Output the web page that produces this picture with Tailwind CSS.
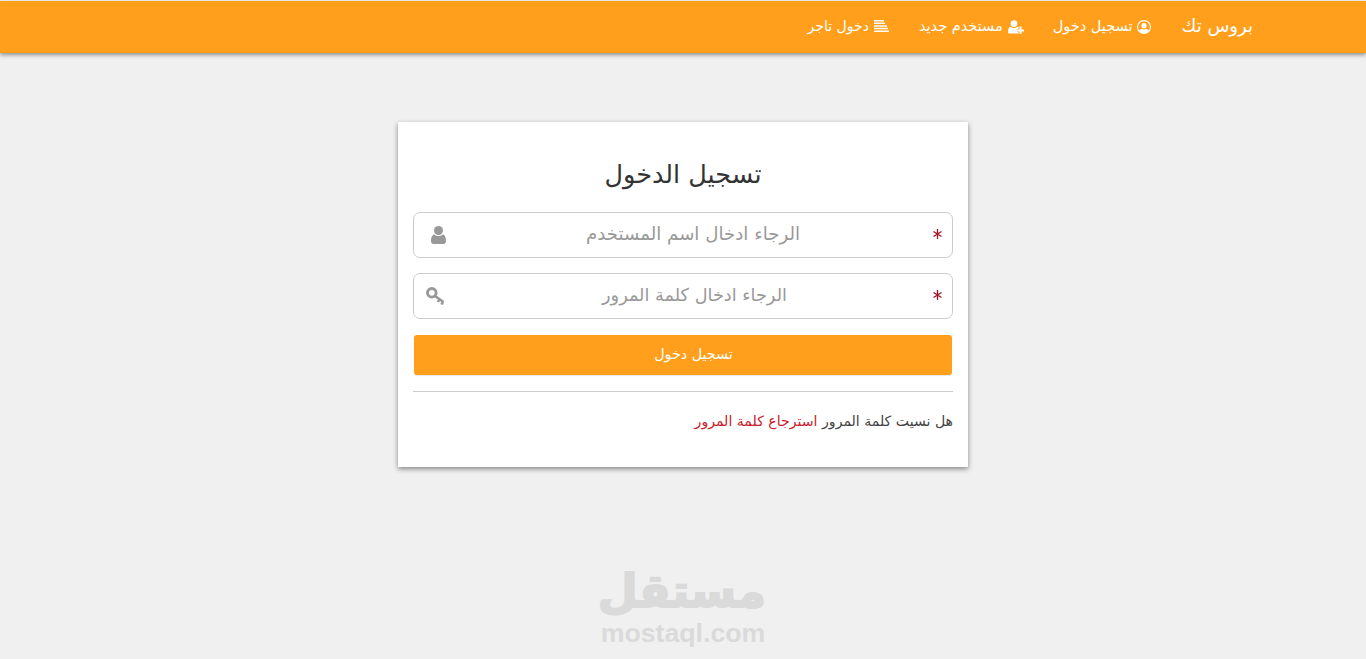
<!DOCTYPE html>
<html lang="ar" dir="rtl">
<head>
  <meta charset="UTF-8">
  <title>تسجيل الدخول</title>
  <script src="https://cdn.jsdelivr.net/npm/@tailwindcss/browser@4"></script>
</head>
<body class="relative h-[659px] overflow-hidden bg-[#f0f0f0] font-['DejaVu_Sans',sans-serif] text-[#444]">
  <!-- Navbar -->
  <nav class="mt-px flex h-[52px] items-center bg-[#ff9f1c] pr-[113px] text-white shadow-[0_2px_4px_rgba(0,0,0,0.4)]">
    <a class="mb-[3px] ml-[30px] text-[18px]">بروس تك</a>
    <a class="ml-[29px] flex items-center gap-[5px] text-[14.5px]">
      <svg class="h-[14px] w-[14px]" viewBox="0 0 16 16" fill="currentColor"><path fill-rule="evenodd" d="M8 0a8 8 0 1 0 0 16A8 8 0 0 0 8 0zm0 1.400a6.600 6.600 0 0 1 5.200 10.700C12.500 10.800 11.300 10 10.300 10c-.7.500-1.400.8-2.300.8s-1.600-.3-2.300-.8c-1 0-2.200.8-2.900 2.100A6.600 6.600 0 0 1 8 1.400zM8 3.500a3 3 0 1 0 0 6 3 3 0 0 0 0-6z"/></svg>
      <span>تسجيل دخول</span>
    </a>
    <a class="ml-[30px] flex items-center gap-[5px] text-[14.5px]">
      <svg class="h-[14px] w-[16px]" viewBox="0 0 16 14" fill="currentColor"><circle cx="6" cy="3.600" r="3.400"/><path d="M0 12c0-3 .8-5 2.600-5.300C3.500 7.500 4.700 8 6 8s2.500-.5 3.400-1.300c.4 0 .8.200 1.100.4V9H9v3h1.500v1.500H1.500C.5 13.500 0 13 0 12z"/><path d="M11.500 6.500h2V9.500H16v2h-2.500v2.500h-2v-2.500H9v-2h2.500z"/></svg>
      <span>مستخدم جديد</span>
    </a>
    <a class="mb-[2px] flex items-center gap-[5px] text-[14px]">
      <svg class="h-[12px] w-[15px]" viewBox="0 0 15 12" fill="currentColor"><path d="M0 0h10v1.500H0zM0 2.600h11v1.500H0zM0 5.200h13v1.500H0zM0 7.800h14v1.500H0zM0 10.400h15V12H0z"/></svg>
      <span>دخول تاجر</span>
    </a>
  </nav>

  <!-- Login card -->
  <main class="mx-auto mt-[69px] h-[345px] w-[570px] bg-white px-[15px] pt-[35px] shadow-[0_2px_5px_rgba(0,0,0,0.45)]">
    <h1 class="h-[55px] text-center text-[25.500px] leading-[34px] text-[#333]">تسجيل الدخول</h1>
    <div class="flex h-[46px] items-center rounded-[7px] border border-[#ccc] pl-[17px] pr-[10px]">
      <svg class="mb-[2px] h-[10px] w-[9px]" viewBox="0 0 9 10" stroke="#a31327" stroke-width="1.300"><path d="M4.500 0v10M0.500 2.500l8 5M8.500 2.500l-8 5"/></svg>
      <span class="flex-1 pb-[2px] pl-[7px] text-center text-[18.200px] text-[#999]">الرجاء ادخال اسم المستخدم</span>
      <svg class="h-[18px] w-[15px]" viewBox="0 0 15 18" fill="#999"><circle cx="7.500" cy="4.500" r="4.500"/><path d="M0 15c0-4 1.500-6.500 3.500-6.500 1 1 2.500 1.500 4 1.500s3-.5 4-1.500c2 0 3.500 2.500 3.500 6.500 0 2-1 3-2.500 3h-10C1 18 0 17 0 15z"/></svg>
    </div>
    <div class="mt-[15px] flex h-[46px] items-center rounded-[7px] border border-[#ccc] pl-[12px] pr-[10px]">
      <svg class="mb-[2px] h-[10px] w-[9px]" viewBox="0 0 9 10" stroke="#a31327" stroke-width="1.300"><path d="M4.500 0v10M0.500 2.500l8 5M8.500 2.500l-8 5"/></svg>
      <span class="flex-1 pb-[2px] pl-[10px] text-center text-[17.700px] text-[#999]">الرجاء ادخال كلمة المرور</span>
      <svg class="h-[18px] w-[20px]" viewBox="0 0 20 18" fill="none" stroke="#999"><circle cx="5.800" cy="5.800" r="4.300" stroke-width="2.900"/><path d="M9 9L17.500 15M13.500 12l-1.500 3M17 14.500l-1.500 3" stroke-width="2.700"/></svg>
    </div>
    <button class="mx-px mt-4 block h-10 w-[538px] rounded-[3px] bg-[#ff9f1c] pl-[21px] text-[14.300px] text-white shadow-[0_1px_1px_rgba(0,0,0,0.1)]">تسجيل دخول</button>
    <hr class="mt-4 border-[#ccc]">
    <p class="mt-[19px] text-[14.100px] text-[#444]">هل نسيت كلمة المرور <a class="text-[#c9202a]">استرجاع كلمة المرور</a></p>
  </main>

  <!-- Watermark -->
  <div class="absolute bottom-[12px] left-[600px] w-[166px] text-center text-[#dadada]" dir="ltr">
    <div class="text-[46px] leading-[56px] font-bold [-webkit-text-stroke:2px_#dadada]" dir="rtl">مستقل</div>
    <div class="font-['Liberation_Sans',sans-serif] text-[26.700px] leading-[28px] font-bold">mostaql.com</div>
  </div>
</body>
</html>
